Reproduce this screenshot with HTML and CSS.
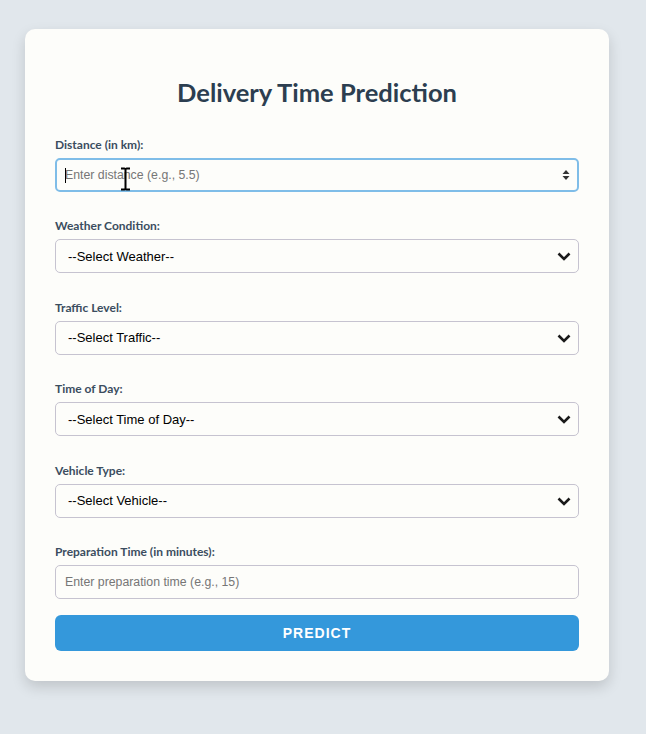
FILE: index.html
```html
<!DOCTYPE html>
<html lang="en">
<head>
<meta charset="utf-8">
<title>Delivery Time Prediction</title>
<link rel="stylesheet" href="styles.css">
</head>
<body>
<div class="card">
  <h2 class="title">Delivery Time Prediction</h2>
  <form class="form">
    <div class="group">
      <label class="label" for="distance">Distance (in km):</label>
      <div class="field">
        <input class="control input focused" type="number" id="distance" placeholder="Enter distance (e.g., 5.5)">
        <span class="caret"></span>
        <svg class="spin" width="8" height="12" viewBox="0 0 8 12"><path d="M4 1 L7.5 5 H0.5 Z M4 11 L7.5 7 H0.5 Z" fill="#333"/></svg>
        <svg class="ibeam" width="11" height="24" viewBox="0 0 11 24"><path d="M1 1.5 H4.5 Q5.5 1.5 5.5 3 V21 Q5.5 22.5 4.5 22.5 H1 M10 1.5 H6.5 Q5.5 1.5 5.5 3 M10 22.5 H6.5 Q5.5 22.5 5.5 21" fill="none" stroke="#000" stroke-width="2"/></svg>
      </div>
    </div>
    <div class="group">
      <label class="label" for="weather">Weather Condition:</label>
      <div class="field">
        <select class="control select" id="weather"><option>--Select Weather--</option></select>
        <svg class="chevron" width="14" height="9" viewBox="0 0 14 9"><path d="M1.5 1.5 L7 7 L12.5 1.5" fill="none" stroke="#1a1a1a" stroke-width="2.6"/></svg>
      </div>
    </div>
    <div class="group">
      <label class="label" for="traffic">Traffic Level:</label>
      <div class="field">
        <select class="control select" id="traffic"><option>--Select Traffic--</option></select>
        <svg class="chevron" width="14" height="9" viewBox="0 0 14 9"><path d="M1.5 1.5 L7 7 L12.5 1.5" fill="none" stroke="#1a1a1a" stroke-width="2.6"/></svg>
      </div>
    </div>
    <div class="group">
      <label class="label" for="time">Time of Day:</label>
      <div class="field">
        <select class="control select" id="time"><option>--Select Time of Day--</option></select>
        <svg class="chevron" width="14" height="9" viewBox="0 0 14 9"><path d="M1.5 1.5 L7 7 L12.5 1.5" fill="none" stroke="#1a1a1a" stroke-width="2.6"/></svg>
      </div>
    </div>
    <div class="group">
      <label class="label" for="vehicle">Vehicle Type:</label>
      <div class="field">
        <select class="control select" id="vehicle"><option>--Select Vehicle--</option></select>
        <svg class="chevron" width="14" height="9" viewBox="0 0 14 9"><path d="M1.5 1.5 L7 7 L12.5 1.5" fill="none" stroke="#1a1a1a" stroke-width="2.6"/></svg>
      </div>
    </div>
    <div class="group last">
      <label class="label" for="prep">Preparation Time (in minutes):</label>
      <input class="control input" type="number" id="prep" placeholder="Enter preparation time (e.g., 15)">
    </div>
    <button class="button" type="button">Predict</button>
  </form>
</div>
</body>
</html>
```
FILE: styles.css
```css
* { box-sizing: border-box; }
html, body { margin: 0; padding: 0; }
body {
  background: #e1e7ec;
  min-height: 734px;
  padding: 29px 0 0 25px;
  font-family: "Open Sans", "Liberation Sans", sans-serif;
}
.card {
  width: 584px;
  background: #fdfdfa;
  border-radius: 10px;
  padding: 30px 30px 30px;
  box-shadow: 0 6px 14px rgba(0, 0, 0, 0.15);
}
.title {
  margin: 18px 0 30px;
  text-align: center;
  font-family: "Lato", "Open Sans", sans-serif;
  font-weight: 700;
  font-size: 25.5px;
  line-height: 30px;
  color: #2c3e50;
}
.form { display: flex; flex-direction: column; }
.group { display: flex; flex-direction: column; margin-bottom: 26.4px; }
.group.last { margin-bottom: 16px; }
.label {
  font-family: "Lato", "Open Sans", sans-serif;
  font-weight: 700;
  font-size: 12px;
  line-height: 16px;
  color: #3b4d5f;
  margin-bottom: 5px;
}
.field { position: relative; }
.control {
  display: block;
  width: 100%;
  height: 34px;
  border: 1px solid #c6c3d0;
  border-radius: 5px;
  background: transparent;
  padding: 0 9px;
  font-family: "Liberation Sans", Arial, sans-serif;
  font-size: 13px;
  color: #000;
}
.input { font-size: 12.3px; }
.control::placeholder { color: #767676; }
.control::-webkit-inner-spin-button,
.control::-webkit-outer-spin-button { -webkit-appearance: none; margin: 0; }
.control.focused {
  border: 2px solid #7fbde8;
  padding-left: 8px;
  outline: none;
}
.select {
  -webkit-appearance: none;
  appearance: none;
  padding-left: 12px;
}
.chevron { position: absolute; right: 8px; top: 13px; pointer-events: none; }
.caret {
  position: absolute;
  left: 10px;
  top: 10px;
  width: 1px;
  height: 15px;
  background: #000;
}
.spin { position: absolute; right: 9px; top: 11px; }
.ibeam { position: absolute; left: 65px; top: 9px; }
.button {
  height: 36px;
  border: none;
  border-radius: 6px;
  background: #3498db;
  color: #fff;
  font-family: "Liberation Sans", Arial, sans-serif;
  font-weight: 700;
  font-size: 14px;
  letter-spacing: 1px;
  text-transform: uppercase;
}
```
